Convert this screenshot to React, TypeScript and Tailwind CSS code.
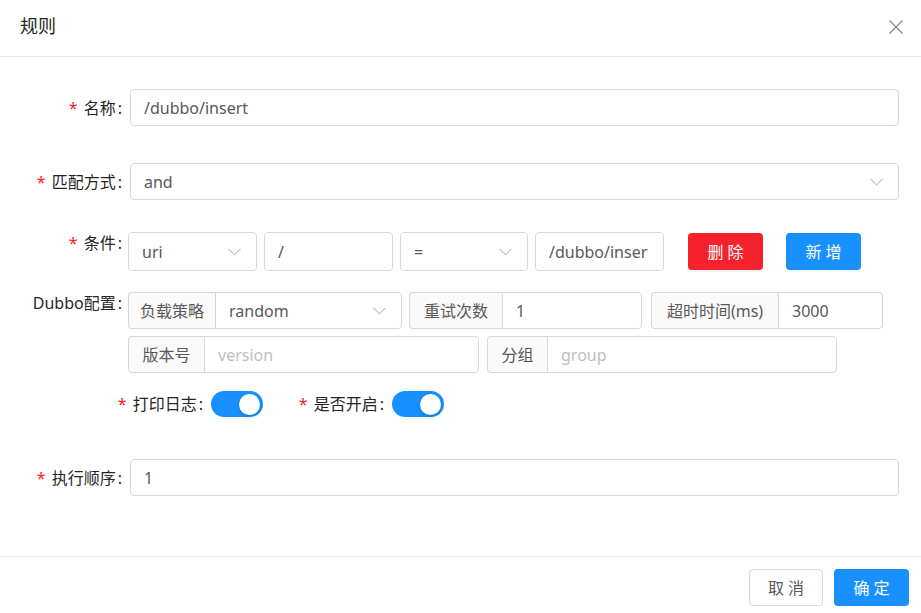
import type { ReactNode } from 'react';

const FONT = "font-['Noto_Sans','Noto_Sans_CJK_SC',sans-serif]";

function Chevron() {
  return (
    <svg width="13" height="8" viewBox="0 0 13 8" className="shrink-0">
      <polyline points="0.5,0.8 6.5,6.8 12.5,0.8" fill="none" stroke="#bfbfbf" strokeWidth="1.1" />
    </svg>
  );
}

// form label: "* text:" with the colon and its 8px margin, right aligned
function Label({ children, required = false, className = '' }: { children: ReactNode; required?: boolean; className?: string }) {
  return (
    <div className={`flex justify-end items-center whitespace-nowrap text-[16px] text-[#262626] shrink-0 ${className}`}>
      {required && <span className="text-[#f5222d] mr-[6px] text-[16px]">*</span>}
      <span>{children}</span>
      <span className="ml-[2px] mr-[8px]">:</span>
    </div>
  );
}

function Field({ value, select = false, className = '', placeholder }: { value?: string; select?: boolean; className?: string; placeholder?: string }) {
  return (
    <div className={`flex items-center border border-[#d9d9d9] rounded-[4px] bg-white pl-[13px] pr-[15px] overflow-hidden ${className}`}>
      <span className={`flex-1 whitespace-nowrap overflow-hidden text-[16px] ${value ? 'text-[#595959]' : 'text-[#bfbfbf]'}`}>
        {value || placeholder}
      </span>
      {select && <Chevron />}
    </div>
  );
}

function Addon({ label, width, children }: { label: string; width: string; children: ReactNode }) {
  return (
    <div className="flex h-[37px]">
      <div className={`flex items-center justify-center whitespace-nowrap bg-[#fafafa] border border-[#d9d9d9] border-r-0 rounded-l-[4px] text-[16px] text-[#595959] ${width}`}>
        {label}
      </div>
      {children}
    </div>
  );
}

function Toggle() {
  return (
    <div className="w-[52px] h-[26px] shrink-0 rounded-full bg-[#1890ff] flex items-center justify-end pr-[3px]">
      <div className="w-[21px] h-[21px] rounded-full bg-white shadow-[0_2px_4px_rgba(0,35,11,0.2)]" />
    </div>
  );
}

export default function App() {
  return (
    <div className={`w-[921px] h-[613px] bg-white overflow-hidden flex flex-col ${FONT}`}>
      <div className="h-[57px] shrink-0 border-b border-[#e8e8e8] flex items-center justify-between pl-[20px] pr-[17px]">
        <span className="text-[18px] text-[#262626] -mt-[4px]">规则</span>
        <svg width="16" height="16" viewBox="0 0 16 16" className="-mt-[3px]">
          <path d="M1.5 1.5 L14.5 14.5 M14.5 1.5 L1.5 14.5" stroke="#8c8c8c" strokeWidth="1.3" />
        </svg>
      </div>

      <div className="flex-1 flex flex-col pr-[22px]">
        <div className="flex items-center mt-[32px]">
          <Label required className="w-[130px]">名称</Label>
          <Field value="/dubbo/insert" className="flex-1 h-[37px]" />
        </div>

        <div className="flex items-center mt-[37px]">
          <Label required className="w-[130px]">匹配方式</Label>
          <Field value="and" select className="flex-1 h-[37px]" />
        </div>

        <div className="flex items-start mt-[32px]">
          <Label required className="w-[130px] h-[24px] mt-[-1px]">条件</Label>
          <div className="-ml-[2px] flex items-center gap-[7px]">
            <Field value="uri" select className="w-[129px] h-[39px]" />
            <Field value="/" className="w-[129px] h-[39px]" />
            <Field value="=" select className="w-[128px] h-[39px]" />
            <Field value="/dubbo/insert" className="w-[129px] h-[39px] pr-[2px]" />
            <button className="ml-[17px] w-[75px] h-[37px] rounded-[4px] bg-[#f5222d] text-white text-[16px] shadow-[0_2px_0_rgba(0,0,0,0.04)]">删 除</button>
            <button className="ml-[16px] w-[75px] h-[37px] rounded-[4px] bg-[#1890ff] text-white text-[16px] shadow-[0_2px_0_rgba(0,0,0,0.04)]">新 增</button>
          </div>
        </div>

        <div className="flex items-start mt-[21px]">
          <Label className="w-[130px] h-[22px]">Dubbo配置</Label>
          <div className="-ml-[2px] flex flex-col gap-[7px]">
            <div className="flex items-center">
              <Addon label="负载策略" width="w-[87px]">
                <Field value="random" select className="w-[187px] h-[37px] rounded-l-none pl-[13px] pr-[14px]" />
              </Addon>
              <div className="ml-[7px]">
                <Addon label="重试次数" width="w-[93px]">
                  <Field value="1" className="w-[140px] h-[37px] rounded-l-none" />
                </Addon>
              </div>
              <div className="ml-[9px]">
                <Addon label="超时时间(ms)" width="w-[127px]">
                  <Field value="3000" className="w-[105px] h-[37px] rounded-l-none" />
                </Addon>
              </div>
            </div>
            <div className="flex items-center">
              <Addon label="版本号" width="w-[76px]">
                <Field placeholder="version" className="w-[275px] h-[37px] rounded-l-none" />
              </Addon>
              <div className="ml-[8px]">
                <Addon label="分组" width="w-[60px]">
                  <Field placeholder="group" className="w-[290px] h-[37px] rounded-l-none" />
                </Addon>
              </div>
            </div>
          </div>
        </div>

        <div className="flex items-center mt-[18px]">
          <Label required className="w-[211px]">打印日志</Label>
          <Toggle />
          <Label required className="ml-[35px] w-[94px]">是否开启</Label>
          <Toggle />
        </div>

        <div className="flex items-center mt-[42px]">
          <Label required className="w-[130px]">执行顺序</Label>
          <Field value="1" className="flex-1 h-[37px]" />
        </div>
      </div>

      <div className="h-[57px] shrink-0 border-t border-[#e8e8e8] flex justify-end items-start pt-[12px] pr-[12px] gap-[11px]">
        <button className="w-[74px] h-[37px] rounded-[4px] border border-[#d9d9d9] bg-white text-[16px] text-[#595959]">取 消</button>
        <button className="w-[75px] h-[37px] rounded-[4px] bg-[#1890ff] text-white text-[16px]">确 定</button>
      </div>
    </div>
  );
}
